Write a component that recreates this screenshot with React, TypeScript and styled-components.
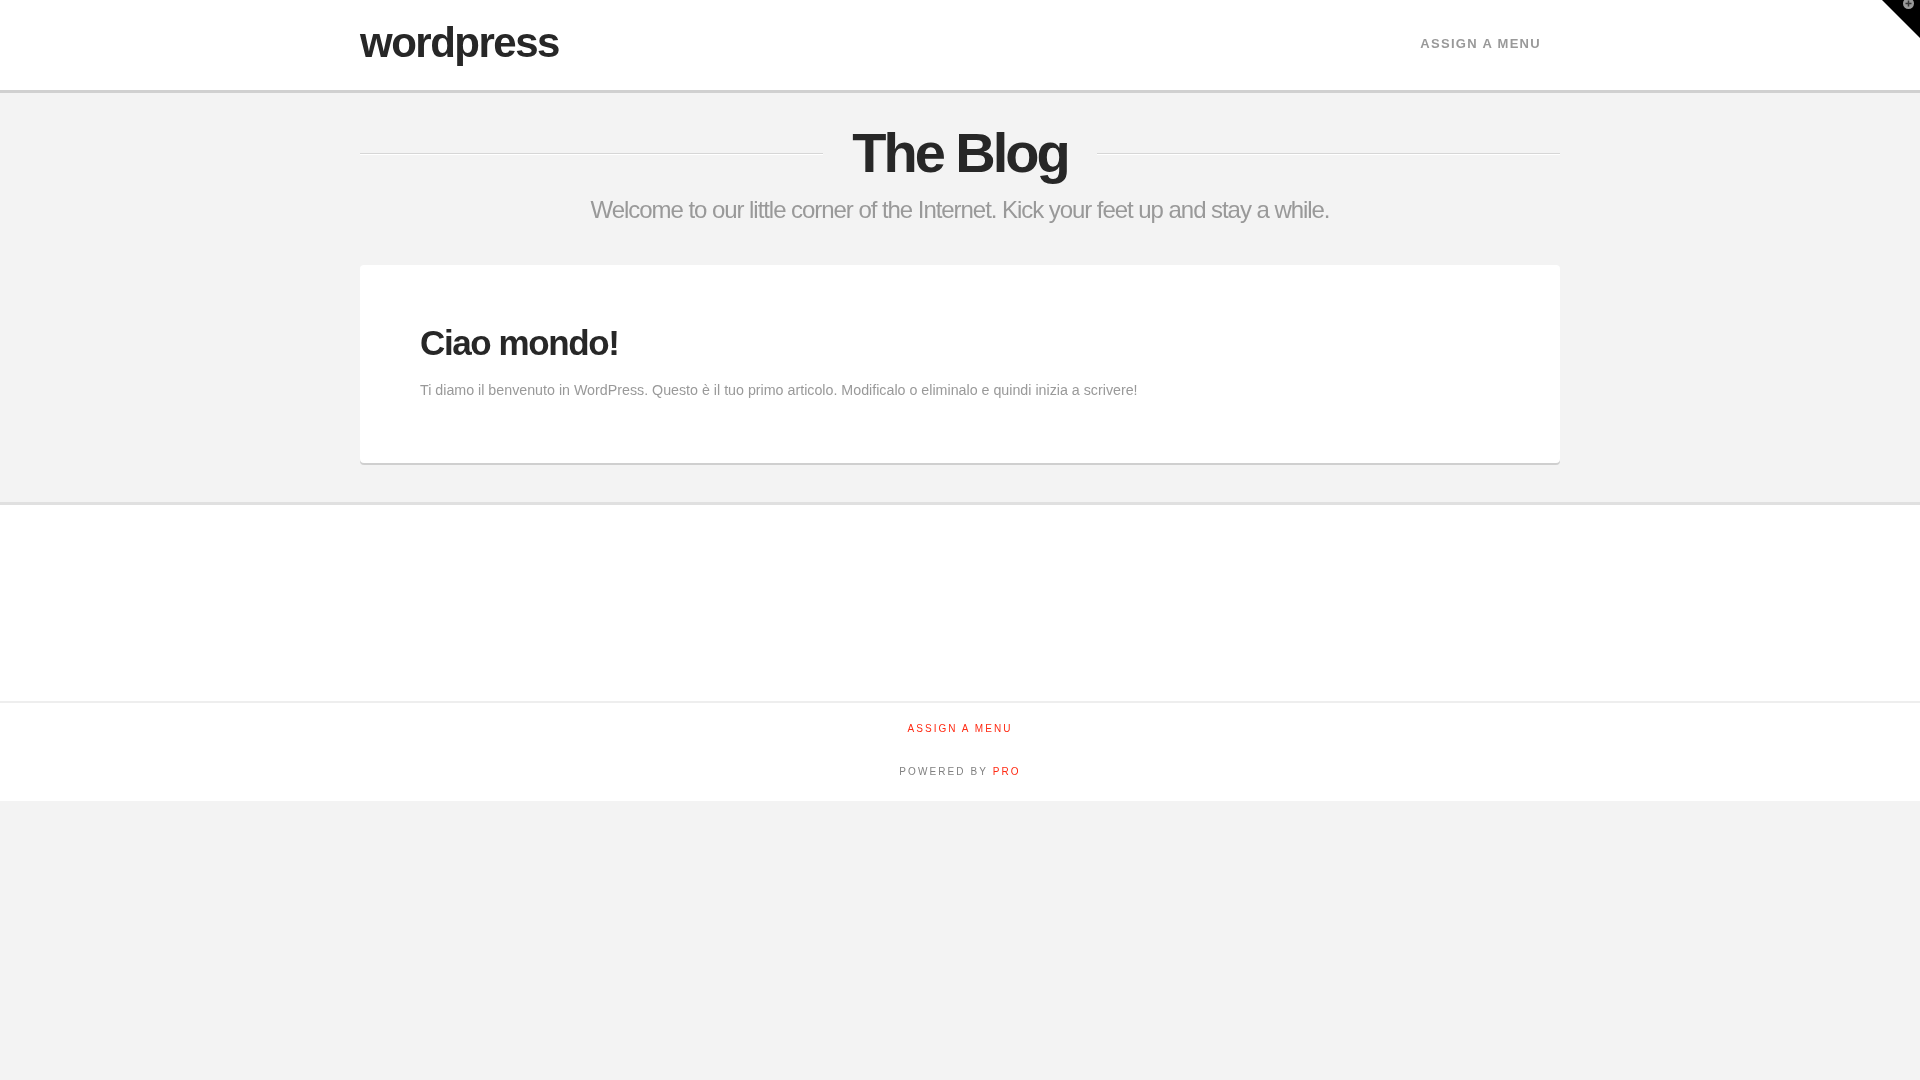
import React from 'react'
import styled, { createGlobalStyle } from 'styled-components'

const GlobalStyle = createGlobalStyle`
  html, body {
    margin: 0;
    padding: 0;
    background: #f3f3f3;
    font-family: "Liberation Sans", Arial, sans-serif;
  }
`

const Page = styled.div`
  position: relative;
  min-height: 1080px;
  overflow: hidden;
  will-change: transform;
`

const Wrap = styled.div`
  width: 1200px;
  margin: 0 auto;
`

const Masthead = styled.header`
  background: #fff;
  height: 90px;
  border-bottom: 3px solid #d0d0d0;
`

const MastheadInner = styled(Wrap)`
  display: flex;
  justify-content: space-between;
  align-items: center;
  height: 90px;
`

const Brand = styled.a`
  font-size: 42px;
  line-height: 1;
  font-weight: 700;
  letter-spacing: -1.5px;
  color: #272727;
  margin-top: -5px;
`

const NavItem = styled.a`
  font-size: 13px;
  font-weight: 700;
  letter-spacing: 1.3px;
  color: #999;
  margin: 0 19px 3px 0;
`

const Landmark = styled(Wrap)`
  padding-top: 28px;
  text-align: center;
`

const TitleRow = styled.div`
  display: flex;
  align-items: center;
  gap: 26.5px;
`

const TitleRule = styled.span`
  flex: 1;
  height: 1px;
  background: #d6d6d6;
  border-bottom: 1px solid #fff;
`

const Title = styled.h1`
  margin: 0 0 2px;
  padding: 0 2.25px;
  font-size: 56px;
  line-height: 64px;
  font-weight: 700;
  letter-spacing: -3px;
  color: #272727;
`

const Subtitle = styled.p`
  margin: 5px 0 0;
  font-size: 24px;
  line-height: 36px;
  letter-spacing: -1.05px;
  color: #999;
`

const Main = styled(Wrap)`
  padding: 37px 0 39px;
`

const Card = styled.article`
  background: #fff;
  height: 198px;
  box-sizing: border-box;
  padding: 60px;
  border-radius: 4px;
  box-shadow: 0 2px 0 #cfcfcf;
`

const CardTitle = styled.h2`
  margin: 0;
  font-size: 35px;
  line-height: 36px;
  font-weight: 700;
  letter-spacing: -1.4px;
  color: #272727;
`

const CardText = styled.p`
  margin: 18px 0 0;
  font-size: 14.25px;
  line-height: 22px;
  color: #999;
`

const Widgets = styled.section`
  background: #fff;
  height: 196px;
  border-top: 3px solid #e0e0e0;
`

const Footer = styled.footer`
  background: #fff;
  height: 98px;
  border-top: 2px solid #eee;
  text-align: center;
`

const FooterMenu = styled.a`
  display: block;
  padding-top: 19px;
  font-size: 10px;
  line-height: 14px;
  letter-spacing: 2.05px;
  color: #ff2a13;
`

const Credit = styled.p`
  margin: 29px 0 0;
  font-size: 10px;
  line-height: 14px;
  letter-spacing: 2.1px;
  color: #808080;
`

const CreditLink = styled.span`
  color: #ff2a13;
`

const Toggle = styled.svg`
  position: absolute;
  top: 0;
  right: 0;
  width: 38px;
  height: 38px;
`

export default function App() {
  return (
    <Page>
      <GlobalStyle />
      <Masthead>
        <MastheadInner>
          <Brand>wordpress</Brand>
          <NavItem>ASSIGN A MENU</NavItem>
        </MastheadInner>
      </Masthead>
      <Landmark>
        <TitleRow>
          <TitleRule />
          <Title>The Blog</Title>
          <TitleRule />
        </TitleRow>
        <Subtitle>Welcome to our little corner of the Internet. Kick your feet up and stay a while.</Subtitle>
      </Landmark>
      <Main>
        <Card>
          <CardTitle>Ciao mondo!</CardTitle>
          <CardText>Ti diamo il benvenuto in WordPress. Questo è il tuo primo articolo. Modificalo o eliminalo e quindi inizia a scrivere!</CardText>
        </Card>
      </Main>
      <Widgets />
      <Footer>
        <FooterMenu>ASSIGN A MENU</FooterMenu>
        <Credit>POWERED BY <CreditLink>PRO</CreditLink></Credit>
      </Footer>
      <Toggle viewBox="0 0 38 38">
        <path d="M0 0H38V38Z" fill="#000" />
        <circle cx="26.5" cy="3.5" r="5.5" fill="#999" />
        <path d="M23.5 3.5H29.5M26.5 .5V6.5" stroke="#333" strokeWidth="1.5" />
      </Toggle>
    </Page>
  )
}
